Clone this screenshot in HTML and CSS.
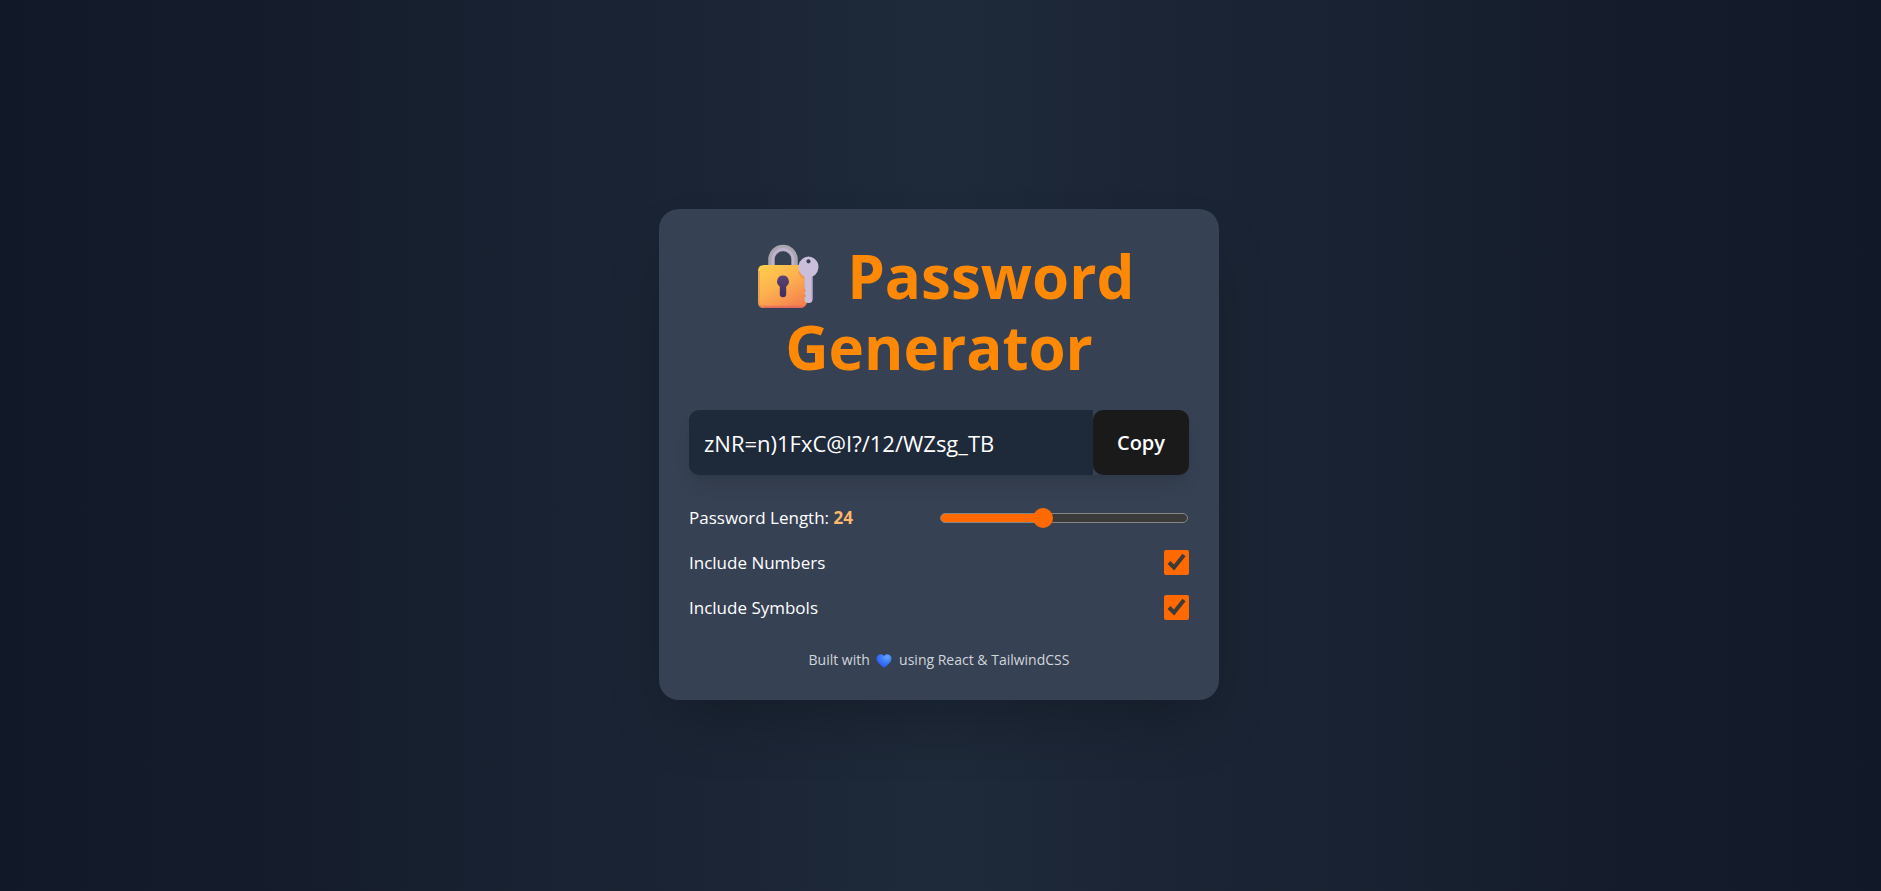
FILE: index.html
```html
<!DOCTYPE html>
<html lang="en">
<head>
<meta charset="utf-8">
<meta name="viewport" content="width=device-width, initial-scale=1">
<title>Password Generator</title>
<link rel="stylesheet" href="styles.css">
</head>
<body class="page">
<main class="card">
  <h1 class="title">
    <svg class="lock" viewBox="0 0 62 64" aria-hidden="true">
      <defs>
        <linearGradient id="body" x1="0.1" y1="0" x2="0.75" y2="1">
          <stop offset="0" stop-color="#ffcd4d"/>
          <stop offset="0.5" stop-color="#fcb04e"/>
          <stop offset="1" stop-color="#f5814f"/>
        </linearGradient>
        <linearGradient id="edge" x1="0" y1="0" x2="0" y2="1">
          <stop offset="0.92" stop-color="#e0605f" stop-opacity="0"/>
          <stop offset="1" stop-color="#e0605f"/>
        </linearGradient>
        <linearGradient id="hole" x1="0" y1="0" x2="0" y2="1">
          <stop offset="0" stop-color="#5a4375"/>
          <stop offset="1" stop-color="#3e2d5c"/>
        </linearGradient>
      </defs>
      <path d="M13.5 24V15.500a11.500 11.500 0 0 1 23 0V24" fill="none" stroke="#a9a6ad" stroke-width="6.500"/>
      <path d="M14.800 24V15.500a10.200 10.200 0 0 1 20.400 0V24" fill="none" stroke="#c0b2d0" stroke-width="2.500"/>
      <path d="M6 21H43Q49 21 49 27V59Q47 64 42 64H6Q0 64 0 58V27Q0 21 6 21Z" fill="url(#body)"/>
      <path d="M6 21H43Q49 21 49 27V59Q47 64 42 64H6Q0 64 0 58V27Q0 21 6 21Z" fill="url(#edge)"/>
      <path d="M1 27V58Q1 63 6 63" fill="none" stroke="#dc9050" stroke-width="1.500" opacity="0.700"/>
      <path d="M40 27Q41 33 46 35V56Q47 59 49 59V27Z" fill="#e58549" opacity="0.500"/>
      <path d="M25 31.500a6 6 0 0 1 3.200 11V50a3.200 3.200 0 0 1-6.400 0V42.500A6 6 0 0 1 25 31.500Z" fill="url(#hole)"/>
      <path fill-rule="evenodd" d="M50.500 12.500A10.500 10.500 0 0 1 54.500 32.500V55.500Q54.500 59 50.500 59Q46.500 59 46.500 55.500V53.500L48 52L46.500 50V48L48 46.500L46.500 44.500V32.500A10.500 10.500 0 0 1 50.500 12.500ZM50.500 15.200a2.100 2.100 0 1 0 0 4.200a2.100 2.100 0 1 0 0-4.200Z" fill="#cbbedb"/>
      <path d="M53.800 33V55" stroke="#b9a9cd" stroke-width="1.200"/>
    </svg>
    Password Generator
  </h1>
  <div class="output">
    <input class="password" type="text" value="zNR=n)1FxC@I?/12/WZsg_TB" aria-label="Generated password" readonly>
    <button class="copy" type="button">Copy</button>
  </div>
  <div class="options">
    <div class="option">
      <label for="length">Password Length: <span class="count">24</span></label>
      <input class="slider" id="length" type="range" min="6" max="50" value="24">
    </div>
    <div class="option">
      <label for="numbers">Include Numbers</label>
      <input class="check" id="numbers" type="checkbox" checked>
    </div>
    <div class="option">
      <label for="symbols">Include Symbols</label>
      <input class="check" id="symbols" type="checkbox" checked>
    </div>
  </div>
  <p class="footer">Built with
    <svg class="heart" viewBox="0 0 16 14" role="img" aria-label="love">
      <defs>
        <radialGradient id="blue" cx="0.7" cy="0.2" r="0.8">
          <stop offset="0" stop-color="#66a4ff"/>
          <stop offset="0.5" stop-color="#3c7dff"/>
          <stop offset="1" stop-color="#3156ee"/>
        </radialGradient>
      </defs>
      <path d="M8 2C9.500 0 12 0 13.600 1C15.800 2.500 16 5.500 14.600 7.500C13 10 10.500 12 8.800 13.200Q8 13.800 7.200 13.200C5.500 12 3 10 1.400 7.500C0 5.500 0.200 2.500 2.400 1C4 0 6.500 0 8 2Z" fill="url(#blue)"/>
    </svg>
    using React &amp; TailwindCSS</p>
</main>
</body>
</html>
```
FILE: styles.css
```css
* {
  box-sizing: border-box;
}

.page {
  margin: 0;
  min-height: 100vh;
  display: flex;
  flex-direction: column;
  align-items: center;
  justify-content: center;
  padding: 38px 23px 20px 20px;
  color: #fff;
  color-scheme: dark;
  font-family: "Open Sans", "Noto Sans", sans-serif;
  background: linear-gradient(to right, #111827, #1e2939, #111827);
}

.card {
  width: 100%;
  max-width: 560px;
  padding: 32px 30px 30px;
  border-radius: 20px;
  background: #364153;
  box-shadow: 0 31px 62px -15px rgba(0, 0, 0, 0.25);
}

.title {
  margin: 0 0 27px;
  color: #ff8904;
  font-size: 60px;
  font-weight: 700;
  line-height: 71px;
  text-align: center;
}

.lock {
  width: 62px;
  height: 64px;
  margin: 0 12px 0 14px;
  vertical-align: -9px;
}

.output {
  display: flex;
  border-radius: 10px;
  box-shadow: 0 12px 18px -4px rgba(0, 0, 0, 0.1), 0 5px 8px -5px rgba(0, 0, 0, 0.1);
}

.password {
  flex: 1;
  min-width: 0;
  height: 65px;
  padding: 0 15px;
  border: 0;
  border-radius: 10px 0 0 10px;
  outline: 0;
  color: #fff;
  font: 400 22px "Open Sans", "Noto Sans", sans-serif;
  background: #1e2939;
}

.copy {
  padding: 0 24px;
  border: 0;
  border-radius: 10px;
  color: #fff;
  font: 600 20px "Open Sans", "Noto Sans", sans-serif;
  background: #1a1a1a;
}

.options {
  display: grid;
  gap: 20px;
  margin-top: 30px;
}

.option {
  display: flex;
  align-items: center;
  justify-content: space-between;
  height: 25px;
  font-size: 17px;
}

.count {
  color: #ffb86a;
  font-weight: 700;
}

.slider {
  appearance: none;
  width: 50%;
  height: 20px;
  margin: 0;
  padding: 0 1px;
  background: none;
}

.slider::-webkit-slider-runnable-track {
  height: 10px;
  border: 1px solid #858585;
  border-radius: 5px;
  background: linear-gradient(to right, #ff6900 42%, #3b3b3b 42%);
}

.slider::-webkit-slider-thumb {
  appearance: none;
  width: 20px;
  height: 20px;
  margin-top: -6px;
  border-radius: 50%;
  background: #ff6900;
}

.check {
  width: 25px;
  height: 25px;
  margin: 0;
  accent-color: #ff6900;
}

.footer {
  margin: 30px 0 0;
  color: #d1d5dc;
  font-size: 14px;
  line-height: 20px;
  text-align: center;
}

.heart {
  width: 16px;
  height: 14px;
  margin: 0 3px;
  vertical-align: -3px;
}
```
